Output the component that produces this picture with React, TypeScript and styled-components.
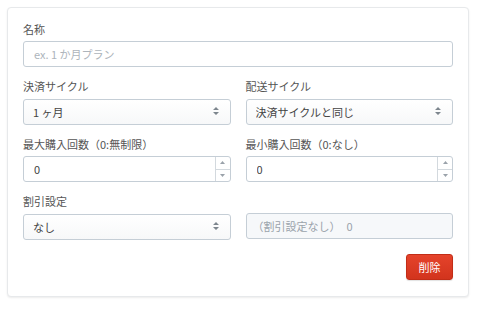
import React from 'react';
import styled, { createGlobalStyle } from 'styled-components';

const GlobalStyle = createGlobalStyle`
  html, body {
    margin: 0;
    padding: 0;
    background: #fff;
  }
  body {
    font-family: "Noto Sans CJK JP", "Noto Sans", "Liberation Sans", sans-serif;
    color: #444;
  }
`;

const Page = styled.div`
  padding: 7px 9px 7px 7px;
`;

const Card = styled.div`
  background: #fff;
  border: 1px solid #e7e9eb;
  border-radius: 4px;
  box-shadow: 0 1px 2px rgba(0, 0, 0, 0.08);
  padding: 13px 15px 16px;
  display: flex;
  flex-direction: column;
  gap: 11px;
`;

const Row = styled.div`
  display: grid;
  grid-template-columns: 1fr 1fr;
  column-gap: 15px;
`;

const Field = styled.div`
  display: flex;
  flex-direction: column;
  gap: 4px;
  min-width: 0;
`;

const Label = styled.label`
  font-size: 11px;
  line-height: 16px;
  color: #555;
`;

const boxBase = `
  box-sizing: border-box;
  height: 26px;
  border: 1px solid #c5ced6;
  border-radius: 3px;
  font-family: inherit;
  font-size: 11px;
  color: #444;
`;

const TextInput = styled.input`
  ${boxBase}
  width: 100%;
  padding: 0 10px;
  background: #fff;
  outline: none;
  &::placeholder {
    color: #adb4bb;
  }
`;

const SelectWrap = styled.div`
  position: relative;
`;

const Select = styled.select`
  ${boxBase}
  width: 100%;
  padding: 0 24px 0 9px;
  appearance: none;
  background: linear-gradient(#ffffff, #f7f8f9);
  outline: none;
`;

const Arrow = styled.svg`
  position: absolute;
  right: 12px;
  top: 9px;
  pointer-events: none;
`;

const NumberBox = styled.div`
  ${boxBase}
  display: flex;
  background: #fff;
  overflow: hidden;
`;

const NumberInput = styled.input`
  flex: 1;
  min-width: 0;
  border: none;
  outline: none;
  padding: 0 10px;
  font-family: inherit;
  font-size: 11px;
  color: #444;
  background: transparent;
`;

const Spinner = styled.div`
  width: 14px;
  display: flex;
  flex-direction: column;
  border-left: 1px solid #d3d9de;
`;

const SpinHalf = styled.div<{ $top?: boolean }>`
  flex: 1;
  display: flex;
  align-items: center;
  justify-content: center;
  border-top: ${p => (p.$top ? 'none' : '1px solid #d3d9de')};
`;

const Disabled = styled.div`
  ${boxBase}
  display: flex;
  align-items: center;
  gap: 6px;
  padding: 0 10px 0 6px;
  background: #f6f8fa;
  color: #9aa3ab;
`;

const Footer = styled.div`
  display: flex;
  justify-content: flex-end;
  padding-top: 3px;
`;

const DangerButton = styled.button`
  height: 26px;
  width: 47px;
  border: 1px solid #c22d17;
  border-radius: 3px;
  background: linear-gradient(#e5432b, #d2341d);
  color: #fff;
  font-family: inherit;
  font-size: 11px;
  cursor: pointer;
  box-shadow: 0 1px 1px rgba(0, 0, 0, 0.12);
`;

const SelectArrow = () => (
  <Arrow width="6" height="8" viewBox="0 0 6 8">
    <path d="M3 0 L6 3 H0 Z M0 5 H6 L3 8 Z" fill="#7d868e" />
  </Arrow>
);

const Tri = ({ up }: { up?: boolean }) => (
  <svg width="5" height="3" viewBox="0 0 5 3">
    <path d={up ? 'M2.5 0 L5 3 H0 Z' : 'M0 0 H5 L2.5 3 Z'} fill="#9aa2aa" />
  </svg>
);

const NumberField = ({ value }: { value: string }) => (
  <NumberBox>
    <NumberInput defaultValue={value} />
    <Spinner>
      <SpinHalf $top><Tri up /></SpinHalf>
      <SpinHalf><Tri /></SpinHalf>
    </Spinner>
  </NumberBox>
);

const SelectField = ({ options }: { options: string[] }) => (
  <SelectWrap>
    <Select defaultValue={options[0]}>
      {options.map(o => <option key={o}>{o}</option>)}
    </Select>
    <SelectArrow />
  </SelectWrap>
);

export default function App() {
  return (
    <Page>
      <GlobalStyle />
      <Card>
        <Field>
          <Label>名称</Label>
          <TextInput placeholder="ex. 1 か月プラン" />
        </Field>
        <Row>
          <Field>
            <Label>決済サイクル</Label>
            <SelectField options={['1 ヶ月', '2 ヶ月', '3 ヶ月']} />
          </Field>
          <Field>
            <Label>配送サイクル</Label>
            <SelectField options={['決済サイクルと同じ']} />
          </Field>
        </Row>
        <Row>
          <Field>
            <Label>最大購入回数（0:無制限）</Label>
            <NumberField value="0" />
          </Field>
          <Field>
            <Label>最小購入回数（0:なし）</Label>
            <NumberField value="0" />
          </Field>
        </Row>
        <Row>
          <Field>
            <Label>割引設定</Label>
            <SelectField options={['なし', '割合', '金額']} />
          </Field>
          <Field>
            <Label>&nbsp;</Label>
            <Disabled>
              <span>（割引設定なし）</span>
              <span>0</span>
            </Disabled>
          </Field>
        </Row>
        <Footer>
          <DangerButton>削除</DangerButton>
        </Footer>
      </Card>
    </Page>
  );
}
